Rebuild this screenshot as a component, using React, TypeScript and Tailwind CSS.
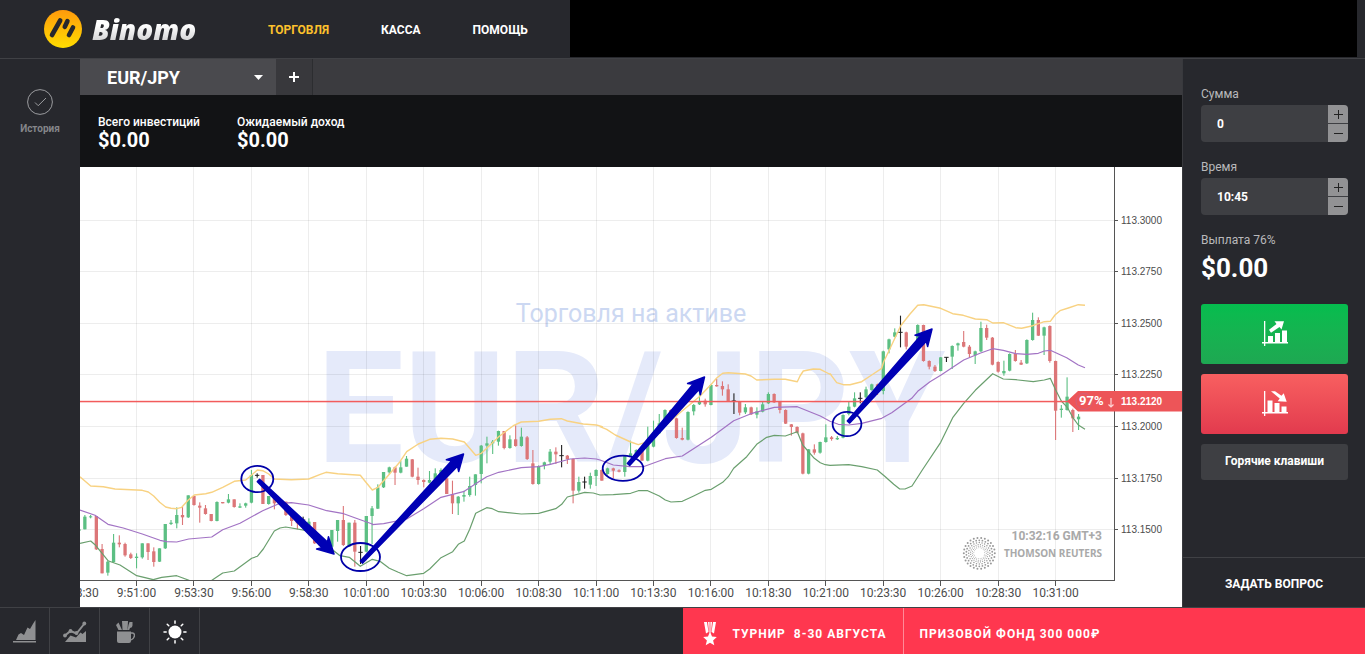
import React from "react";

type Point = [number, number];

/* ---------- Chart data ---------- */

// A stretch of the session. Values are thirds of a chart unit measured from the stretch's origin.
// Candle rows: "colour high top bottom low", g = up, r = down, k = unchanged.
interface Stretch {
  origin: Point;
  first: number;
  candles: string;
  upper: string;
  middle: string;
  lower: string;
}

const STRETCHES: Stretch[] = [
  {
    origin: [80, 440],
    first: -10,
    candles:
      "g 266 268 272 274|g 225 230 268 268|g 225 229 232 235|r 228 228 328 330|r 312 327 400 400|g 362 365 398 407|g 282 308 366 368|r 286 308 313 322|r 308 312 346 350|r 338 343 354 357|g 340 350 354 385|g 310 310 352 356|r 310 310 336 360|r 322 334 366 380|g 325 325 365 366|g 252 252 325 327|g 240 248 252 255|g 202 225 250 265|r 200 225 232 255|g 166 166 232 234|r 168 168 195 197|r 187 197 203 248|r 195 205 222 224|r 222 222 243 244|g 184 186 243 244|r 186 186 190 190|g 162 178 188 190|r 178 178 201 203|g 190 199 203 204|g 188 190 197 203|g 90 105 188 190|k 100 106 106 113|r 105 105 192 192|g 168 168 192 194|r 168 170 190 208|r 180 180 187 187|r 185 185 225 228|r 223 225 243 258|r 240 243 250 268|k 230 240 240 250|g 235 245 262 262|r 246 246 310 312|r 300 306 318 320|r 310 314 330 332|g 270 270 320 330|g 240 240 273 305|r 198 240 315 318|g 248 248 320 320|r 240 248 335 380|k 318 337 337 372",
    upper:
      "0,110 32,138 70,140 105,147 170,150 187,151 205,156 221,168 239,187 257,201 273,205 290,206 305,202 325,180 343,165 377,161 395,157 428,142 463,124 497,120 515,105 532,90 548,92 566,102 583,117 634,119 686,117 721,103 738,97 773,101 841,106 859,128 877,150",
    middle:
      "0,210 45,226 84,253 130,264 187,282 240,301 260,305 290,306 326,297 395,291 428,269 480,250 548,212 600,190 634,188 686,195 740,212 791,221 841,239 877,252",
    lower:
      "0,310 32,303 45,314 84,362 120,375 170,407 220,419 245,412 290,407 325,420 345,430 375,432 397,420 428,399 463,393 515,355 532,349 550,327 583,273 600,264 617,261 680,272 721,300 765,335 780,347 808,352 841,379 877,358",
  },
  {
    origin: [350, 360],
    first: 40,
    candles:
      "g 468 468 575 577|g 438 445 468 552|g 373 382 446 447|g 336 336 382 384|g 320 322 337 343|r 320 322 338 375|g 303 322 338 340|g 288 296 320 320|r 297 298 350 352|r 323 350 360 374|r 358 360 366 382|g 333 360 368 370|g 325 340 358 360|g 325 330 355 356|r 350 355 402 402|r 362 403 430 462|g 408 410 430 465|g 392 405 410 425|g 350 378 405 410|g 343 343 375 407|g 255 257 342 370|g 230 250 257 310|g 240 245 250 282|g 212 213 245 257|r 213 213 264 268|g 226 238 264 266|r 196 238 258 260|g 203 230 258 260|r 228 232 297 300|r 270 310 372 374|g 316 318 372 374|g 305 307 318 328|g 267 275 305 313|r 262 275 283 312|k 255 287 287 322|r 285 287 297 312|r 295 297 392 430|g 350 366 392 398|k 350 366 366 386|g 338 348 374 386|g 328 330 348 378|r 328 330 362 362|g 323 325 342 344|r 323 325 332 355|r 328 331 335 337",
    upper:
      "67,390 84,382 118,343 150,305 170,275 205,252 239,238 273,235 308,237 343,246 377,286 394,280 410,265 446,230 490,197 514,186 566,184 601,178 634,176 652,183 700,192 739,195 757,200",
    middle:
      "67,494 101,491 170,477 221,446 273,412 343,394 377,371 410,350 446,337 514,323 566,320 601,313 660,297 704,294 739,297",
    lower:
      "67,598 90,604 118,625 145,637 170,647 221,640 239,627 273,593 308,575 325,553 343,543 359,508 377,460 410,443 427,446 446,455 514,462 566,460 617,446 635,433 652,411 704,397 730,399",
  },
  {
    origin: [600, 350],
    first: 85,
    candles:
      "g 316 318 366 380|g 272 310 320 320|g 298 300 320 320|r 298 300 332 332|g 230 285 332 334|g 212 250 290 292|g 192 220 250 250|g 178 180 220 222|r 178 180 205 207|r 203 205 264 266|r 233 264 269 271|g 184 186 269 271|g 162 165 184 196|g 128 155 163 165|r 146 152 163 170|g 103 105 165 166|r 87 105 109 110|r 94 108 118 137|r 103 118 153 154|k 130 153 153 192|r 153 153 188 196|g 162 172 187 192|r 170 172 193 195|g 172 184 194 205|g 153 163 185 187|g 127 132 160 162|r 130 132 157 159|r 153 155 180 190|r 178 180 221 222|r 222 223 231 257|r 229 231 248 250|r 248 250 371 373|g 297 298 371 373|r 283 298 308 314|g 275 276 308 311|g 223 262 276 278|r 258 262 267 272|g 258 264 268 270",
    upper:
      "0,230 20,238 46,255 92,276 115,284 143,275 190,232 240,188 298,140 334,103 350,84 368,70 385,68 436,72 453,78 470,90 523,88 556,88 592,95 600,78 610,63 640,57 661,58 694,75",
    middle:
      "0,330 40,345 90,350 130,350 196,326 247,318 334,262 401,212 453,191 523,172 592,170 661,198",
    lower:
      "0,435 40,434 92,430 115,422 143,422 178,438 196,450 213,456 247,454 281,438 316,421 334,418 368,397 385,380 401,355 440,320 470,283 500,262 523,256 556,258 592,245 608,285 643,325 661,338 676,344",
  },
  {
    origin: [830, 290],
    first: 123,
    candles:
      "g 373 375 443 445|g 335 350 372 376|g 307 325 350 352|k 307 325 325 340|g 290 298 322 324|g 281 283 300 302|r 281 283 305 315|g 182 184 303 313|g 146 148 178 190|g 115 127 140 142|k 77 127 127 172|r 125 127 170 178|r 168 170 185 187|g 103 105 170 172|r 104 105 213 215|r 211 213 230 238|r 225 230 243 246|g 201 202 243 244|k 202 202 202 216|g 166 168 200 237|g 158 160 166 182|r 123 156 170 172|r 165 170 192 203|g 182 184 196 222|g 95 114 184 186|r 104 114 143 150|r 141 143 224 226|r 214 216 245 248|g 212 243 250 257|g 190 192 242 244|r 180 191 213 215|r 210 218 224 225|g 148 150 220 222|g 68 90 150 152|r 82 90 137 138|g 110 112 137 195|r 106 108 213 218|r 212 213 362 450|g 345 356 360 383|g 262 320 360 362|r 356 360 385 426|g 372 380 388 420",
    upper:
      "0,251 20,278 40,284 60,284 95,275 125,255 155,235 161,215 185,165 212,107 240,72 263,46 281,44 332,55 368,71 400,76 436,87 470,89 488,99 520,98 557,113 575,115 608,107 643,95 661,94 675,75 690,62 715,54 745,44 765,46",
    middle:
      "0,394 25,403 56,405 95,400 155,385 185,368 245,325 263,304 300,275 332,256 401,210 450,190 488,176 520,181 557,191 590,193 625,190 643,183 661,181 710,203 745,225 765,233",
    lower:
      "0,526 56,524 95,530 142,540 166,560 191,583 209,597 225,597 246,588 277,540 332,457 368,383 401,340 436,301 488,251 520,267 557,269 610,275 643,270 661,265 677,300 694,333 712,352 728,382 745,405 765,418",
  },
];

const STEP = 5.744;
const FIRST_TICK = 136.5;
const TIME_STEP = 57.44;
const BOTTOM = 580.5;
const RIGHT = 1114.5;

const COLORS: Record<string, string> = { g: "#5cbf83", r: "#dc7678", k: "#222" };

const TIMES = [
  "8:48:30", "9:51:00", "9:53:30", "9:56:00", "9:58:30", "10:01:00", "10:03:30", "10:06:00", "10:08:30",
  "10:11:00", "10:13:30", "10:16:00", "10:18:30", "10:21:00", "10:23:30", "10:26:00", "10:28:30", "10:31:00",
];

const PRICES: [string, number][] = [
  ["113.3000", 220.5],
  ["113.2750", 271.5],
  ["113.2500", 323.5],
  ["113.2250", 374.5],
  ["113.2000", 426.5],
  ["113.1750", 478.5],
  ["113.1500", 529.5],
];

function band(key: "upper" | "middle" | "lower") {
  return STRETCHES.flatMap((s) =>
    s[key].split(" ").map((pair) => {
      const [x, y] = pair.split(",").map(Number);
      return `${(s.origin[0] + x / 3).toFixed(1)},${(s.origin[1] + y / 3).toFixed(1)}`;
    })
  ).join(" ");
}

const CANDLES = STRETCHES.flatMap((s) =>
  s.candles.split("|").map((row, n) => {
    const [kind, ...values] = row.split(" ");
    const [high, top, bottom, low] = values.map((v) => s.origin[1] + Number(v) / 3);
    return { kind, x: FIRST_TICK + STEP * (s.first + n), high, top, bottom, low };
  })
);

/* ---------- Chart parts ---------- */

function Arrow({ from, to }: { from: Point; to: Point }) {
  const length = Math.hypot(to[0] - from[0], to[1] - from[1]);
  const angle = (Math.atan2(to[1] - from[1], to[0] - from[0]) * 180) / Math.PI;
  const neck = length - 13;
  return (
    <polygon
      transform={`translate(${from[0]} ${from[1]}) rotate(${angle})`}
      points={`0,-1.6 ${neck},-4 ${neck - 3},-8.5 ${length},0 ${neck - 3},8.5 ${neck},4 0,1.6`}
      fill="#0000b4"
      stroke="#0000b4"
      strokeWidth="1.5"
      strokeLinejoin="round"
    />
  );
}

function ReutersMark() {
  const rings = [
    [15.5, 26, 1],
    [13, 26, 0.9],
    [10.7, 24, 0.75],
    [8.7, 24, 0.6],
    [7, 22, 0.5],
    [5.5, 20, 0.45],
  ];
  return (
    <g transform="translate(979.3 553.3)" fill="#999">
      {rings.flatMap(([radius, count, size], r) =>
        Array.from({ length: count }, (_, i) => {
          const a = ((i + (r % 2) / 2) / count) * Math.PI * 2;
          return <circle key={`${r}-${i}`} cx={Math.cos(a) * radius} cy={Math.sin(a) * radius} r={size} />;
        })
      )}
    </g>
  );
}

function Chart() {
  return (
    <svg viewBox="80 167 1102 440" className="block h-auto w-full bg-white font-['Roboto',sans-serif]" role="img" aria-label="EUR/JPY">
      <defs>
        <clipPath id="plot">
          <rect x="80" y="167" width="1034" height="413" />
        </clipPath>
      </defs>

      <text x="631" y="322" textAnchor="middle" fontSize="25" fill="#ccd8f2">
        Торговля на активе
      </text>
      <text x="631" y="462" textAnchor="middle" fontSize="155" fontWeight="700" fill="#e5eafa">
        EUR/JPY
      </text>

      <g stroke="#000" strokeOpacity="0.07">
        {TIMES.slice(1).map((t, i) => {
          const x = Math.round(FIRST_TICK + TIME_STEP * i - 0.5) + 0.5;
          return <line key={t} x1={x} x2={x} y1="167" y2="580" />;
        })}
        {PRICES.map(([p, y]) => (
          <line key={p} x1="80" x2="1114" y1={y} y2={y} />
        ))}
      </g>

      <g clipPath="url(#plot)">
        {CANDLES.map((c, i) => (
          <g key={i} fill={COLORS[c.kind]}>
            <rect x={c.x - 0.5} y={c.high} width="1.1" height={c.low - c.high} />
            {c.kind === "k" ? (
              <rect x={c.x - 2.2} y={c.top - 0.5} width="4.4" height="1" />
            ) : (
              <rect x={c.x - 1.6} y={c.top} width="3.3" height={Math.max(1, c.bottom - c.top)} />
            )}
          </g>
        ))}
        <g fill="none" strokeWidth="1.2" strokeLinejoin="round">
          <polyline points={band("upper")} stroke="#f8d282" strokeWidth="1.4" />
          <polyline points={band("middle")} stroke="#a273c4" />
          <polyline points={band("lower")} stroke="#6a9f6e" />
        </g>
      </g>

      <g stroke="#555">
        <line x1={RIGHT} x2={RIGHT} y1="167" y2="581" />
        <line x1="80" x2="1115" y1={BOTTOM} y2={BOTTOM} />
        {TIMES.slice(1).map((t, i) => {
          const x = Math.round(FIRST_TICK + TIME_STEP * i - 0.5) + 0.5;
          return <line key={t} x1={x} x2={x} y1="581" y2="586" />;
        })}
        {PRICES.map(([p, y]) => (
          <line key={p} x1="1114" x2="1118" y1={y} y2={y} />
        ))}
      </g>

      <g fontSize="12" fill="#4c4c4c" textAnchor="middle">
        {TIMES.map((t, i) => (
          <text key={t} x={FIRST_TICK + TIME_STEP * (i - 1)} y="597">
            {t}
          </text>
        ))}
      </g>
      <g fontSize="10" fill="#4c4c4c" fontFamily="'Liberation Sans', sans-serif">
        {PRICES.map(([p, y]) => (
          <text key={p} x="1121" y={y + 3.5}>
            {p}
          </text>
        ))}
      </g>

      <g fontWeight="700" fill="#a9a9a9" textAnchor="end">
        <text x="1102" y="540" fontSize="12">
          10:32:16 GMT+3
        </text>
        <text x="1102" y="557" fontSize="10" fontFamily="'Noto Sans', sans-serif">
          THOMSON REUTERS
        </text>
      </g>
      <ReutersMark />

      <rect x="80" y="400.8" width="990" height="1.5" fill="#f25c5c" />
      <path d="M1067 401.3 1078 391H1182V411.6H1078Z" fill="#ed5558" />
      <circle cx="1084" cy="401.5" r="8" fill="none" stroke="#b56a9a" strokeOpacity="0.5" />
      <g fill="#fff" fontWeight="700">
        <text x="1079" y="405" fontSize="13">
          97%
        </text>
        <text x="1121" y="405" fontSize="10" fontFamily="'Liberation Sans', sans-serif">
          113.2120
        </text>
      </g>
      <path d="M1111 398v9m-2.500-2.500 2.500 2.500 2.500-2.500" fill="none" stroke="#ffd5d5" strokeWidth="1.2" />

      <g fill="none" stroke="#0000a8" strokeWidth="1.8">
        <ellipse cx="257.3" cy="479" rx="16" ry="13.2" />
        <ellipse cx="360.5" cy="557" rx="19.5" ry="14" />
        <ellipse cx="623" cy="468.3" rx="20.3" ry="12.6" />
        <ellipse cx="847" cy="424" rx="14.4" ry="12.2" />
      </g>
      <Arrow from={[258.5, 480.5]} to={[334, 554]} />
      <Arrow from={[361.5, 562]} to={[463.5, 454]} />
      <Arrow from={[628.5, 464.5]} to={[704.5, 377]} />
      <Arrow from={[848.5, 422]} to={[932, 329]} />
    </svg>
  );
}

/* ---------- Icons ---------- */

function LogoMark() {
  return (
    <svg width="38" height="38" viewBox="0 0 38 38" aria-hidden="true">
      <defs>
        <linearGradient id="sun" x1="0" y1="0" x2="0" y2="1">
          <stop offset="0" stopColor="#ff9a0c" />
          <stop offset="1" stopColor="#ffdd00" />
        </linearGradient>
      </defs>
      <circle cx="19" cy="19" r="19" fill="url(#sun)" />
      <g stroke="#27282d" strokeWidth="4.6" strokeLinecap="round">
        <path d="M8 25 16.200 10.500" />
        <path d="M20.800 16.800 23.400 11.200" />
        <path d="M25 25 29 17.500" />
      </g>
    </svg>
  );
}

function TrendIcon({ up }: { up: boolean }) {
  return (
    <svg width="26" height="26" viewBox="0 0 26 26" fill="#fff" aria-hidden="true">
      <path d="M2 0h1.3v25H2zM0 21h26v1.6H0z" />
      {up ? (
        <>
          <path d="M6 15h5v6.5H6zM13 12h5v9.5h-5zM20 9.5h5v12h-5z" />
          <path d="M7 8.800 14.500 3 12.500 0.300H22L19.500 8.500l-2-2.500L9 11.800z" />
        </>
      ) : (
        <>
          <path d="M5.500 9.500h5v12h-5zM12.500 12h5v9.500h-5zM19.500 15.500h5v6h-5z" />
          <path d="M9 0.300h4l6.500 4.500 2.200-2.500 3 8.500-9-.6 2-2.600z" />
        </>
      )}
    </svg>
  );
}

function AreaIcon() {
  return (
    <svg width="24" height="24" viewBox="0 0 24 24" fill="#8f9092" aria-hidden="true">
      <path d="M3 20 5.500 14.500 8 13l3 2 3.500-7.500L17 9l3.500-6 2-3v20zM0 21h23v1.500H0z" />
    </svg>
  );
}

function LineIcon() {
  return (
    <svg width="24" height="24" viewBox="0 0 24 24" fill="#8f9092" aria-hidden="true">
      <path d="M2 22 7.500 15.500l5.500 2 4.500-5 2 1.500 3.500-3v11z" />
      <path d="M2 15.500 7.500 11l6 2.500L21.500 3.500" fill="none" stroke="#8f9092" strokeWidth="2" />
      <circle cx="2" cy="15.500" r="1.900" />
      <circle cx="7.500" cy="11" r="1.900" />
      <circle cx="13.500" cy="13" r="1.900" />
      <circle cx="21.300" cy="3.500" r="1.900" />
    </svg>
  );
}

function CupIcon() {
  return (
    <svg width="20" height="24" viewBox="0 0 20 24" fill="#8f9092" aria-hidden="true">
      <path d="M2 11.500h14v9.500q0 2-2 2H4q-2 0-2-2z" />
      <path d="M16 13h1.500q2 0 2 2.500t-3.500 4.500" fill="none" stroke="#8f9092" strokeWidth="1.400" />
      <path d="M7 1h6l-.5 9h-5zM1 5l2.500-2.500L7 10H3.500zM13.500 5l1-3h3v3.500q0 2-2.500 2.500l-.8 2h-1.600z" />
    </svg>
  );
}

function SunIcon() {
  return (
    <svg width="24" height="24" viewBox="0 0 24 24" aria-hidden="true">
      <circle cx="12" cy="12" r="6.500" fill="#fff" />
      <g stroke="#fff" strokeWidth="1.500" strokeLinecap="round">
        {[0, 45, 90, 135, 180, 225, 270, 315].map((a) => (
          <path key={a} d="M12 1v2.200" transform={`rotate(${a} 12 12)`} />
        ))}
      </g>
    </svg>
  );
}

function MedalIcon() {
  return (
    <svg width="14" height="24" viewBox="0 0 14 24" fill="#fff" aria-hidden="true">
      <path d="M1 0h3l1.500 10L3 11.500zM5 0h1.600v10.500H6zM7.400 0H9l-1 10.500h-.6zM10 0h3l-2 11.500L8.500 10z" />
      <path d="M7 9.500l2 5 4.800.6-3.700 3.300 1.200 4.900L7 20.800 2.700 23.300l1.200-4.900L.2 15.100l4.800-.6z" />
    </svg>
  );
}

/* ---------- Panels ---------- */

function Header() {
  return (
    <header className="flex h-[59px] border-b border-[#404145]">
      <a href="#home" className="flex w-[268px] shrink-0 items-center gap-[10px] pl-11">
        <LogoMark />
        <span className="bg-gradient-to-b from-white from-40% to-[#c4c4c6] bg-clip-text pr-1 font-['Open_Sans',sans-serif] text-[28px] leading-9 font-extrabold text-transparent italic">
          Binomo
        </span>
      </a>
      <nav className="flex w-[302px] shrink-0 items-center gap-[52px] pt-px text-[12px] font-bold text-white">
        <a href="#trade" className="text-[#fdc12c]">ТОРГОВЛЯ</a>
        <a href="#cash">КАССА</a>
        <a href="#help">ПОМОЩЬ</a>
      </nav>
      <div className="mr-2 mb-px flex-1 bg-black" />
    </header>
  );
}

function Stat({ label, value }: { label: string; value: string }) {
  return (
    <div className="text-white">
      <dt className="text-[12px] leading-4 font-medium">{label}</dt>
      <dd className="text-[20px] leading-5 font-bold">{value}</dd>
    </div>
  );
}

function Stepper({ id, label, value }: { id: string; label: string; value: string }) {
  const sign = "flex flex-1 items-center justify-center bg-[#929294]";
  return (
    <div>
      <label htmlFor={id} className="block text-[12px] leading-4 text-[#b9b9bb]">
        {label}
      </label>
      <div className="mt-[3px] flex h-[37px] overflow-hidden rounded-[4px] bg-[#3e3f43]">
        <input
          id={id}
          defaultValue={value}
          className="min-w-0 flex-1 bg-transparent pl-4 text-[12px] font-bold text-white outline-none"
        />
        <div className="flex w-5 flex-col gap-px">
          <button type="button" aria-label={`${label}: больше`} className={sign}>
            <svg width="9" height="9" viewBox="0 0 9 9" aria-hidden="true">
              <path d="M4.500 0v9M0 4.500h9" stroke="#222" />
            </svg>
          </button>
          <button type="button" aria-label={`${label}: меньше`} className={sign}>
            <svg width="9" height="9" viewBox="0 0 9 9" aria-hidden="true">
              <path d="M0 4.500h9" stroke="#222" />
            </svg>
          </button>
        </div>
      </div>
    </div>
  );
}

function OrderPanel() {
  return (
    <aside className="flex w-[183px] shrink-0 flex-col border-l border-[#38393d]">
      <div className="flex flex-col pt-[27px] pr-[17px] pl-[18px]">
        <div className="flex flex-col gap-[17px]">
          <Stepper id="amount" label="Сумма" value="0" />
          <Stepper id="time" label="Время" value="10:45" />
        </div>
        <p className="mt-[17px] text-[12px] leading-4 text-[#b9b9bb]">Выплата 76%</p>
        <p className="mt-1 text-[26px] leading-8 font-bold text-white">$0.00</p>
        <div className="mt-5 flex flex-col gap-[10px]">
          <button
            type="button"
            aria-label="Вверх"
            className="flex h-[60px] items-center justify-center rounded-[3px] bg-gradient-to-b from-[#05bd4e] to-[#1ea852]"
          >
            <TrendIcon up />
          </button>
          <button
            type="button"
            aria-label="Вниз"
            className="flex h-[60px] items-center justify-center rounded-[3px] bg-gradient-to-b from-[#f85f60] to-[#e23a4e]"
          >
            <TrendIcon up={false} />
          </button>
          <button type="button" className="h-9 rounded-[3px] bg-[#3e3f43] pb-[2px] text-[12px] font-bold text-white">
            Горячие клавиши
          </button>
        </div>
      </div>
      <button type="button" className="mt-auto h-[50px] border-t border-[#404145] pt-[2px] text-[12px] font-bold text-white">
        ЗАДАТЬ ВОПРОС
      </button>
    </aside>
  );
}

function Footer() {
  const tools = [
    { label: "Тип графика", icon: <AreaIcon /> },
    { label: "Индикаторы", icon: <LineIcon /> },
    { label: "Инструменты", icon: <CupIcon /> },
    { label: "Светлая тема", icon: <SunIcon /> },
  ];
  return (
    <footer className="flex h-[47px] justify-between border-t border-[#404145]">
      <div className="flex">
        {tools.map((t) => (
          <button
            key={t.label}
            type="button"
            aria-label={t.label}
            className="flex w-[50px] items-center justify-center border-r border-[#404145] pt-px"
          >
            {t.icon}
          </button>
        ))}
      </div>
      <a href="#tournament" className="flex w-1/2 bg-[#ff374f] text-[12px] font-bold tracking-[1px] text-white">
        <span className="flex w-[221px] items-center gap-4 border-r border-[#ff8a98] pt-[5px] pl-5 whitespace-pre">
          <MedalIcon />
          {"ТУРНИР  8-30 АВГУСТА"}
        </span>
        <span className="flex items-center pt-[5px] pl-4">ПРИЗОВОЙ ФОНД 300 000₽</span>
      </a>
    </footer>
  );
}

export default function App() {
  return (
    <div className="flex min-h-screen flex-col bg-[#27282d] font-['Roboto',sans-serif]">
      <Header />
      <div className="flex flex-1">
        <aside className="w-20 shrink-0 pt-[30px]">
          <button type="button" className="flex w-full flex-col items-center gap-[6px] text-[10px] font-bold text-[#85868a]">
            <svg width="26" height="26" viewBox="0 0 26 26" fill="none" stroke="#9b9c9f" aria-hidden="true">
              <circle cx="13" cy="13" r="12.400" />
              <path d="M8 13.500l3.200 3.200L19 9" />
            </svg>
            <span className="leading-4">История</span>
          </button>
        </aside>
        <main className="min-w-0 flex-1 bg-white">
          <div className="flex h-9 bg-[#3b3b3f]">
            <div className="relative w-[196px] bg-[#4a4a4e]">
              <select
                aria-label="Актив"
                defaultValue="EUR/JPY"
                className="h-full w-full appearance-none bg-transparent pl-[27px] text-[18px] font-bold text-white outline-none"
              >
                <option>EUR/JPY</option>
              </select>
              <svg width="9" height="5" viewBox="0 0 9 5" fill="#fff" aria-hidden="true" className="pointer-events-none absolute top-4 right-[13px]">
                <path d="M0 0h9L4.500 5z" />
              </svg>
            </div>
            <button type="button" aria-label="Добавить актив" className="flex w-[37px] items-center justify-center border-r border-[#2c2d30] bg-[#38383c]">
              <svg width="10" height="10" viewBox="0 0 10 10" stroke="#fff" strokeWidth="2" aria-hidden="true">
                <path d="M5 0v10M0 5h10" />
              </svg>
            </button>
          </div>
          <dl className="flex h-[72px] gap-[37px] bg-[#121315] pt-[19px] pl-[18px]">
            <Stat label="Всего инвестиций" value="$0.00" />
            <Stat label="Ожидаемый доход" value="$0.00" />
          </dl>
          <Chart />
        </main>
        <OrderPanel />
      </div>
      <Footer />
    </div>
  );
}
